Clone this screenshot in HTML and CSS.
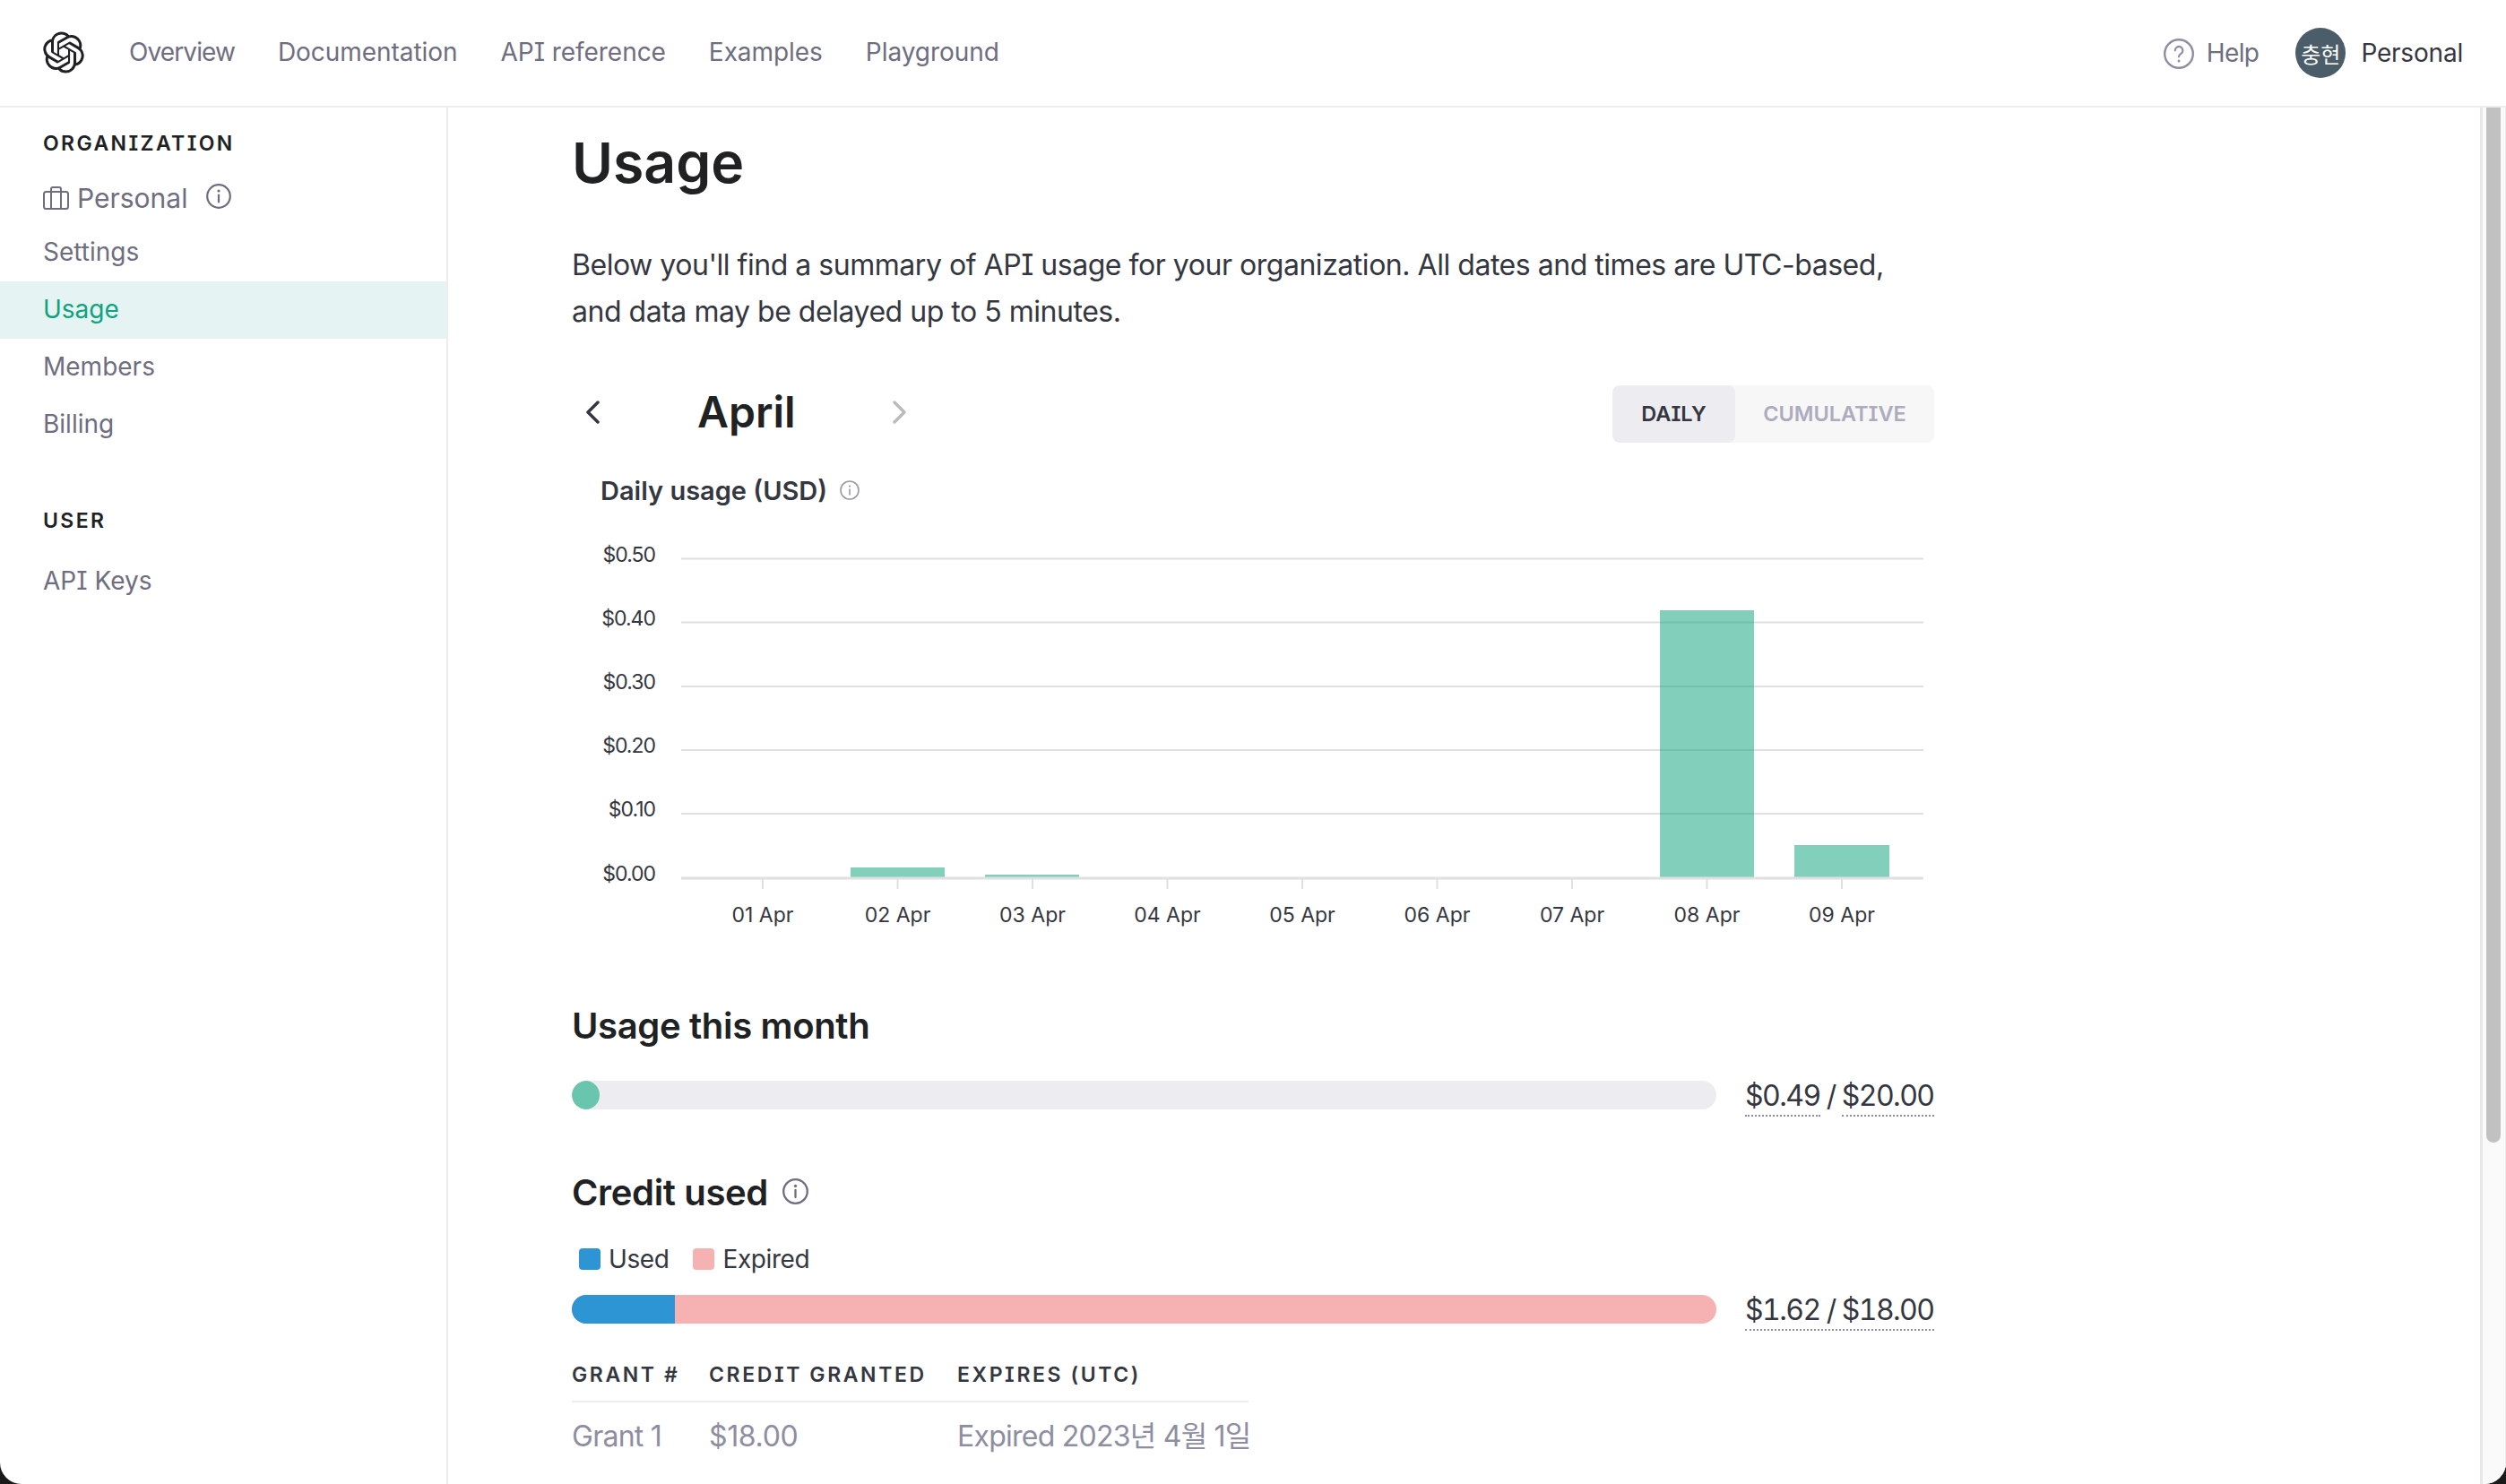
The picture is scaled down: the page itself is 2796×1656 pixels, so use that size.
FILE: index.html
```html
<!DOCTYPE html>
<html lang="en">
<head>
<meta charset="utf-8">
<title>Usage</title>
<link rel="stylesheet" href="styles.css">
</head>
<body>
<div class="app">
  <header class="topbar">
    <svg class="logo" viewBox="0 0 24 24"><path d="M22.2819 9.8211a5.9847 5.9847 0 0 0-.5157-4.9108 6.0462 6.0462 0 0 0-6.5098-2.9A6.0651 6.0651 0 0 0 4.9807 4.1818a5.9847 5.9847 0 0 0-3.9977 2.9 6.0462 6.0462 0 0 0 .7427 7.0966 5.98 5.98 0 0 0 .511 4.9107 6.051 6.051 0 0 0 6.5146 2.9001A5.9847 5.9847 0 0 0 13.2599 24a6.0557 6.0557 0 0 0 5.7718-4.2058 5.9894 5.9894 0 0 0 3.9977-2.9001 6.0557 6.0557 0 0 0-.7475-7.0729zm-9.022 12.6081a4.4755 4.4755 0 0 1-2.8764-1.0408l.1419-.0804 4.7783-2.7582a.7948.7948 0 0 0 .3927-.6813v-6.7369l2.02 1.1686a.071.071 0 0 1 .038.052v5.5826a4.504 4.504 0 0 1-4.4945 4.4944zm-9.6607-4.1254a4.4708 4.4708 0 0 1-.5346-3.0137l.142.0852 4.783 2.7582a.7712.7712 0 0 0 .7806 0l5.8428-3.3685v2.3324a.0804.0804 0 0 1-.0332.0615L9.74 19.9502a4.4992 4.4992 0 0 1-6.1408-1.6464zM2.3408 7.8956a4.485 4.485 0 0 1 2.3655-1.9728V11.6a.7664.7664 0 0 0 .3879.6765l5.8144 3.3543-2.0201 1.1685a.0757.0757 0 0 1-.071 0l-4.8303-2.7865A4.504 4.504 0 0 1 2.3408 7.872zm16.5963 3.8558L13.1038 8.364 15.1192 7.2a.0757.0757 0 0 1 .071 0l4.8303 2.7913a4.4944 4.4944 0 0 1-.6765 8.1042v-5.6772a.79.79 0 0 0-.407-.667zm2.0107-3.0231l-.142-.0852-4.7735-2.7818a.7759.7759 0 0 0-.7854 0L9.409 9.2297V6.8974a.0662.0662 0 0 1 .0284-.0615l4.8303-2.7866a4.4992 4.4992 0 0 1 6.6802 4.66zM8.3065 12.863l-2.02-1.1638a.0804.0804 0 0 1-.038-.0567V6.0742a4.4992 4.4992 0 0 1 7.3757-3.4537l-.142.0805L8.704 5.459a.7948.7948 0 0 0-.3927.6813zm1.0976-2.3654l2.602-1.4998 2.6069 1.4998v2.9994l-2.5974 1.4997-2.6067-1.4997Z"/></svg>
    <nav class="topnav">
      <a class="nav-tight">Overview</a>
      <a>Documentation</a>
      <a>API reference</a>
      <a>Examples</a>
      <a>Playground</a>
    </nav>
    <div class="top-right">
      <a class="help">
        <svg class="help-icon" viewBox="0 0 34 34" fill="none"><circle cx="17" cy="17" r="15.8" stroke="#8e8ea0" stroke-width="2.4"/><path d="M12.8 13.3a4.3 4.3 0 1 1 6.6 3.6c-1.5 1-2.4 1.8-2.4 3.4" stroke="#8e8ea0" stroke-width="2.2" stroke-linecap="round"/><circle cx="17" cy="25" r="1.5" fill="#8e8ea0"/></svg>
        <span>Help</span>
      </a>
      <div class="account">
        <span class="avatar">충현</span>
        <span class="account-name">Personal</span>
      </div>
    </div>
  </header>
  <div class="body">
    <aside class="sidebar">
      <h4 class="side-head">ORGANIZATION</h4>
      <div class="org-row">
        <svg class="brief" viewBox="0 0 29 26" fill="none" stroke="#6e6e80" stroke-width="2"><rect x="1" y="6" width="27" height="19" rx="2.5"/><path d="M9 25V3a2 2 0 0 1 2-2h7a2 2 0 0 1 2 2v22"/></svg>
        <span>Personal</span>
        <svg class="info-side" viewBox="0 0 28 28" fill="none"><circle cx="14" cy="14" r="12.8" stroke="#6e6e80" stroke-width="2.2"/><path d="M14 12.5v8" stroke="#6e6e80" stroke-width="2.2" stroke-linecap="round"/><circle cx="14" cy="8" r="1.6" fill="#6e6e80"/></svg>
      </div>
      <a class="side-link">Settings</a>
      <a class="side-link active">Usage</a>
      <a class="side-link">Members</a>
      <a class="side-link">Billing</a>
      <h4 class="side-head user-head">USER</h4>
      <a class="side-link">API Keys</a>
    </aside>
    <main class="main">
      <div class="content">
        <h1 class="title">Usage</h1>
        <p class="lead">Below you'll find a summary of API usage for your organization. All dates and times are UTC-based,<br>and data may be delayed up to 5 minutes.</p>
        <div class="period-row">
          <div class="period">
            <svg class="chev" viewBox="0 0 16 26" fill="none"><path d="M14 2L3 13l11 11" stroke="#353740" stroke-width="3.5" stroke-linecap="round" stroke-linejoin="round"/></svg>
            <span class="month">April</span>
            <svg class="chev" viewBox="0 0 16 26" fill="none"><path d="M2 2l11 11L2 24" stroke="#bbbbbb" stroke-width="3.5" stroke-linecap="round" stroke-linejoin="round"/></svg>
          </div>
          <div class="toggle">
            <span class="seg on">DAILY</span>
            <span class="seg">CUMULATIVE</span>
          </div>
        </div>
        <div class="chart-title">
          <span>Daily usage (USD)</span>
          <svg class="info-small" viewBox="0 0 22 22" fill="none"><circle cx="11" cy="11" r="10" stroke="#9a9aa5" stroke-width="1.6"/><path d="M11 10v6" stroke="#9a9aa5" stroke-width="1.6" stroke-linecap="round"/><circle cx="11" cy="6.6" r="1.1" fill="#9a9aa5"/></svg>
        </div>
        <svg class="chart" viewBox="638 567 1520 480">
          <g class="grid">
            <path d="M760 623.5H2146M760 694.5H2146M760 766H2146M760 837H2146M760 908H2146"/>
          </g>
          <g class="ticks">
            <path d="M851 980v12M1001.5 980v12M1152 980v12M1302.5 980v12M1453 980v12M1603.5 980v12M1754 980v12M1904.5 980v12M2055 980v12"/>
          </g>
          <g class="bars">
            <rect x="949" y="968" width="105" height="11"/>
            <rect x="1099" y="976" width="105" height="3"/>
            <rect x="1852" y="681" width="105" height="298"/>
            <rect x="2002" y="943" width="106" height="36"/>
          </g>
          <path class="axis" d="M760 980H2146"/>
          <g class="y-labels">
            <text x="731" y="627">$0.50</text>
            <text x="731" y="698">$0.40</text>
            <text x="731" y="769">$0.30</text>
            <text x="731" y="840">$0.20</text>
            <text x="731" y="911">$0.10</text>
            <text x="731" y="983">$0.00</text>
          </g>
          <g class="x-labels">
            <text x="851" y="1029">01 Apr</text>
            <text x="1001.5" y="1029">02 Apr</text>
            <text x="1152" y="1029">03 Apr</text>
            <text x="1302.5" y="1029">04 Apr</text>
            <text x="1453" y="1029">05 Apr</text>
            <text x="1603.5" y="1029">06 Apr</text>
            <text x="1754" y="1029">07 Apr</text>
            <text x="1904.5" y="1029">08 Apr</text>
            <text x="2055" y="1029">09 Apr</text>
          </g>
        </svg>
        <h2 class="section first">Usage this month</h2>
        <div class="meter-row usage-row">
          <div class="meter"><div class="meter-dot"></div></div>
          <div class="amount"><span class="dotted">$0.49</span> / <span class="dotted">$20.00</span></div>
        </div>
        <h2 class="section credit">Credit used
          <svg class="info-large" viewBox="0 0 29 29" fill="none"><circle cx="14.5" cy="14.5" r="13.3" stroke="#6e6e80" stroke-width="2.3"/><path d="M14.5 13v8" stroke="#6e6e80" stroke-width="2.3" stroke-linecap="round"/><circle cx="14.5" cy="8.4" r="1.7" fill="#6e6e80"/></svg>
        </h2>
        <div class="legend">
          <span class="swatch blue"></span><span class="legend-text">Used</span>
          <span class="swatch pink"></span><span class="legend-text">Expired</span>
        </div>
        <div class="meter-row">
          <div class="meter stacked"><div class="seg-blue"></div><div class="seg-pink"></div></div>
          <div class="amount"><span class="dotted">$1.62 / $18.00</span></div>
        </div>
        <table class="grants">
          <thead>
            <tr><th class="c1">GRANT #</th><th class="c2">CREDIT GRANTED</th><th class="c3">EXPIRES (UTC)</th></tr>
          </thead>
          <tbody>
            <tr><td>Grant 1</td><td class="num">$18.00</td><td>Expired 2023년 4월 1일</td></tr>
          </tbody>
        </table>
      </div>
      <div class="scrollbar"><div class="thumb"></div></div>
    </main>
  </div>
</div>
</body>
</html>
```

FILE: styles.css
```css
* { box-sizing: border-box; }
html, body { margin: 0; padding: 0; height: 100%; }
body {
  background: #1a1a1a;
  font-family: Inter, "Noto Sans CJK KR", sans-serif;
  font-feature-settings: "cv08";
  color: #353740;
  overflow: hidden;
}
.app {
  height: 1656px;
  background: #fff;
  display: flex;
  flex-direction: column;
  border-radius: 0 0 24px 24px;
  overflow: hidden;
}
.topbar {
  height: 120px;
  flex: none;
  border-bottom: 2px solid #ececf1;
  display: flex;
  align-items: center;
  padding: 0 48px 0 48px;
}
.logo { width: 46px; height: 47px; fill: #202123; margin-top: -2px; }
.topnav { display: flex; gap: 48px; margin-left: 50px; font-size: 28px; letter-spacing: -0.05px; color: #6e6e80; margin-top: -2px; }
.topnav .nav-tight { letter-spacing: -0.9px; }
.top-right { margin-left: auto; display: flex; align-items: center; }
.help { display: flex; align-items: center; gap: 14px; font-size: 28px; letter-spacing: -0.6px; color: #6e6e80; }
.help-icon { width: 34px; height: 34px; margin-top: 2px; }
.account { display: flex; align-items: center; margin-left: 41px; }
.avatar {
  width: 56px; height: 56px; border-radius: 50%;
  background: #4a5d68; color: #fff; font-size: 24px;
  display: flex; align-items: center; justify-content: center;
}
.account-name { margin-left: 17px; font-size: 28px; letter-spacing: -0.2px; color: #353740; }
.body { flex: 1; display: flex; min-height: 0; }
.sidebar { width: 500px; flex: none; border-right: 2px solid #ececf1; padding-top: 28px; }
.side-head { margin: 0 0 0 48px; font-size: 23px; line-height: 24px; font-weight: 600; letter-spacing: 2.4px; color: #202123; }
.org-row { display: flex; align-items: center; margin: 20px 0 0 48px; height: 58px; color: #6e6e80; font-size: 30px; }
.brief { width: 29px; height: 26px; margin-right: 9px; }
.info-side { width: 28px; height: 28px; margin-left: 21px; margin-top: -4px; }
.side-link { display: flex; align-items: center; height: 64px; padding: 0 0 2px 48px; font-size: 28px; color: #6e6e80; }
.side-link.active { background: #e6f3f3; color: #10a37f; }
.user-head { margin-top: 63px; margin-bottom: 24px; }
.main { flex: 1; display: flex; justify-content: space-between; min-width: 0; overflow: hidden; }
.content { width: 1520px; margin-left: 138px; }
.title { margin: 21px 0 0; font-size: 62.5px; line-height: 80px; font-weight: 600; color: #202123; }
.lead { margin: 49px 0 0; font-size: 32px; line-height: 52px; letter-spacing: -0.47px; color: #353740; }
.period-row { display: flex; justify-content: space-between; align-items: center; margin-top: 56px; }
.period { display: flex; align-items: center; margin: -4px 0 0 15px; }
.chev { width: 16px; height: 26px; }
.month { margin: 0 108px 0 109px; font-size: 48px; line-height: 64px; font-weight: 600; color: #202123; }
.toggle { display: flex; height: 64px; width: 359px; background: #f7f7f8; border-radius: 8px; overflow: hidden; }
.seg { display: flex; align-items: center; justify-content: center; padding-bottom: 2px; font-size: 23.5px; font-weight: 600; color: #acacbe; flex: 1; }
.seg.on { flex: none; width: 137px; background: #ececf1; color: #353740; border-radius: 8px; }
.chart-title { display: flex; align-items: center; margin: 33px 0 0 32px; height: 40px; font-size: 29px; font-weight: 600; color: #353740; }
.info-small { width: 22px; height: 22px; margin-left: 14px; }
.chart { display: block; width: 1520px; height: 480px; }
.grid path, .ticks path { stroke: #e0e0e0; stroke-width: 2; fill: none; }
.axis { stroke: #e0e0e0; stroke-width: 3; fill: none; }
.bars rect { fill: #10a37f; fill-opacity: 0.52; }
.chart text { font-size: 23px; fill: #353740; font-family: Inter, sans-serif; }
.y-labels text { text-anchor: end; letter-spacing: -1px; }
.x-labels text { text-anchor: middle; }
.section { margin: 0; font-size: 40px; line-height: 56px; font-weight: 600; letter-spacing: -0.35px; color: #202123; }
.section.first { margin-top: 70px; }
.meter-row { display: flex; align-items: center; height: 48px; }
.usage-row { margin-top: 25px; }
.meter { width: 1277px; height: 32px; border-radius: 16px; background: #ececf1; overflow: hidden; flex: none; display: flex; }
.meter-dot { width: 31px; height: 32px; border-radius: 50%; background: #6ac5ae; }
.stacked { background: #f6b2b3; }
.seg-blue { width: 115px; background: #2d95d3; }
.seg-pink { flex: 1; }
.amount { margin-left: 32px; font-size: 32px; letter-spacing: -1.55px; font-variant-numeric: tabular-nums; color: #353740; white-space: nowrap; }
.dotted { display: inline-block; border-bottom: 2px dotted #8e8ea0; padding-top: 4px; line-height: 42px; }
.credit { display: flex; align-items: center; margin-top: 57px; }
.info-large { width: 29px; height: 29px; margin-left: 16px; margin-top: -4px; }
.legend { display: flex; align-items: center; margin: 26px 0 12px 8px; height: 40px; font-size: 28px; letter-spacing: -0.4px; color: #353740; }
.swatch { width: 24px; height: 24px; border-radius: 4px; margin-right: 9px; }
.blue { background: #2d95d3; }
.pink { background: #f6b2b3; }
.legend-text { margin-right: 27px; }
.grants { width: 755px; border-collapse: collapse; table-layout: fixed; margin-top: 35px; }
.grants th { text-align: left; font-size: 23px; font-weight: 600; letter-spacing: 2.6px; color: #353740; padding: 0 0 15px; line-height: 28px; border-bottom: 2px solid #ececf1; white-space: nowrap; }
.c1 { width: 153px; }
.c2 { width: 277px; }
.c3 { width: 325px; }
.grants td { font-size: 32px; line-height: 44px; letter-spacing: -0.75px; color: #8e8ea0; padding: 16px 0 0; white-space: nowrap; }
.grants .num { letter-spacing: -0.35px; }
.scrollbar { width: 29px; flex: none; background: #fafafa; border-left: 3px solid #e8e8e8; border-right: 1px solid #eeeeee; padding-left: 4px; }
.thumb { width: 16px; height: 1155px; background: #c1c1c1; border-radius: 0 0 8px 8px; }
```
